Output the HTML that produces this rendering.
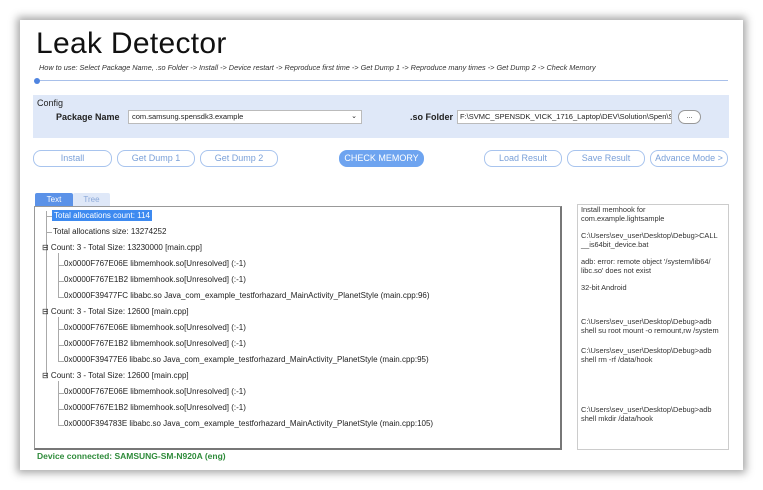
<!DOCTYPE html>
<html><head><meta charset="utf-8"><style>
*{margin:0;padding:0;box-sizing:border-box}
body{width:763px;height:490px;background:#fff;position:relative;overflow:hidden;font-family:"Liberation Sans",sans-serif;color:#222}
.a{position:absolute;white-space:nowrap}
#win{position:absolute;left:20px;top:20px;width:723px;height:450px;background:#fff;box-shadow:0 0 8px 3px rgba(0,0,0,.35)}
.btn{position:absolute;top:150px;height:17px;border:1px solid #a8c4ee;border-radius:8px;color:#7aa0d8;font-size:9px;text-align:center;line-height:15px;background:#fff}
.row{position:absolute;left:0;font-size:8px;color:#222;white-space:nowrap}
.log{position:absolute;left:581px;font-size:7.4px;line-height:9px;color:#333;white-space:nowrap}
.vl{position:absolute;border-left:1px solid #aaa}
.hl{position:absolute;border-top:1px solid #aaa}
</style></head><body>
<div id="win"></div>
<div class="a" style="left:36px;top:27px;font-size:30px;color:#111;letter-spacing:0.3px">Leak Detector</div>
<div class="a" style="left:39px;top:63px;font-size:7.3px;font-style:italic;color:#333">How to use: Select Package Name, .so Folder -&gt; Install -&gt; Device restart -&gt; Reproduce first time -&gt; Get Dump 1 -&gt; Reproduce many times -&gt; Get Dump 2 -&gt; Check Memory</div>
<div class="a" style="left:37px;top:80px;width:691px;border-top:1px solid #a8c0ea"></div>
<div class="a" style="left:34px;top:78px;width:6px;height:6px;border-radius:3px;background:#4f84e0"></div>
<div class="a" style="left:33px;top:95px;width:696px;height:43px;background:#dfe8f8"></div>
<div class="a" style="left:37px;top:98px;font-size:9px">Config</div>
<div class="a" style="left:56px;top:112px;font-size:9px;font-weight:bold">Package Name</div>
<div class="a" style="left:128px;top:110px;width:234px;height:14px;background:#fff;border:1px solid #bbb;font-size:7.5px;line-height:12px;padding-left:3px">com.samsung.spensdk3.example<span style="position:absolute;right:4px;top:0;font-size:7px">&#8964;</span></div>
<div class="a" style="left:410px;top:112px;font-size:9px;font-weight:bold">.so Folder</div>
<div class="a" style="left:457px;top:110px;width:215px;height:14px;background:#fff;border:1px solid #bbb;font-size:7.5px;line-height:12px;padding-left:2px;overflow:hidden">F:\SVMC_SPENSDK_VICK_1716_Laptop\DEV\Solution\Spen\SPen</div>
<div class="a" style="left:678px;top:110px;width:23px;height:14px;border:1px solid #999;border-radius:7px;background:#fff;font-size:7px;text-align:center;line-height:11px">...</div>
<div class="btn" style="left:33px;width:79px">Install</div>
<div class="btn" style="left:117px;width:78px">Get Dump 1</div>
<div class="btn" style="left:200px;width:78px">Get Dump 2</div>
<div class="btn" style="left:339px;width:85px;background:#6ea4f0;border-color:#6ea4f0;color:#fff">CHECK MEMORY</div>
<div class="btn" style="left:484px;width:78px">Load Result</div>
<div class="btn" style="left:567px;width:78px">Save Result</div>
<div class="btn" style="left:650px;width:78px">Advance Mode &gt;</div>
<div class="a" style="left:35px;top:193px;width:38px;height:13px;background:#5b92e8;color:#fff;font-size:8px;text-align:center;line-height:13px;border-radius:2px 2px 0 0">Text</div>
<div class="a" style="left:73px;top:193px;width:37px;height:13px;background:#dfe8f8;color:#8aa8d8;font-size:8px;text-align:center;line-height:13px;border-radius:2px 2px 0 0">Tree</div>
<div class="a" style="left:34px;top:206px;width:528px;height:244px;border:1px solid #999;border-right:2px solid #777;border-bottom:2px solid #777;background:#fff;overflow:hidden">
 <div class="vl" style="left:11px;top:4px;height:166px"></div>
 <div class="hl" style="left:11px;top:9px;width:6px"></div>
 <div class="hl" style="left:11px;top:25px;width:6px"></div>
 <div class="row" style="left:17px;top:3px;background:#3d8af0;color:#fff;padding:1px 2px">Total allocations count: 114</div>
 <div class="row" style="left:18px;top:20px">Total allocations size: 13274252</div>
 <div class="row" style="left:7px;top:36px">&#8863; Count: 3 - Total Size: 13230000 [main.cpp]</div>
 <div class="vl" style="left:23px;top:46px;height:44px"></div>
 <div class="hl" style="left:23px;top:58px;width:6px"></div><div class="row" style="left:29px;top:52px">0x0000F767E06E libmemhook.so[Unresolved] (:-1)</div>
 <div class="hl" style="left:23px;top:74px;width:6px"></div><div class="row" style="left:29px;top:68px">0x0000F767E1B2 libmemhook.so[Unresolved] (:-1)</div>
 <div class="hl" style="left:23px;top:90px;width:6px"></div><div class="row" style="left:29px;top:84px">0x0000F39477FC libabc.so Java_com_example_testforhazard_MainActivity_PlanetStyle (main.cpp:96)</div>
 <div class="row" style="left:7px;top:100px">&#8863; Count: 3 - Total Size: 12600 [main.cpp]</div>
 <div class="vl" style="left:23px;top:110px;height:44px"></div>
 <div class="hl" style="left:23px;top:122px;width:6px"></div><div class="row" style="left:29px;top:116px">0x0000F767E06E libmemhook.so[Unresolved] (:-1)</div>
 <div class="hl" style="left:23px;top:138px;width:6px"></div><div class="row" style="left:29px;top:132px">0x0000F767E1B2 libmemhook.so[Unresolved] (:-1)</div>
 <div class="hl" style="left:23px;top:154px;width:6px"></div><div class="row" style="left:29px;top:148px">0x0000F39477E6 libabc.so Java_com_example_testforhazard_MainActivity_PlanetStyle (main.cpp:95)</div>
 <div class="row" style="left:7px;top:164px">&#8863; Count: 3 - Total Size: 12600 [main.cpp]</div>
 <div class="vl" style="left:23px;top:174px;height:44px"></div>
 <div class="hl" style="left:23px;top:186px;width:6px"></div><div class="row" style="left:29px;top:180px">0x0000F767E06E libmemhook.so[Unresolved] (:-1)</div>
 <div class="hl" style="left:23px;top:202px;width:6px"></div><div class="row" style="left:29px;top:196px">0x0000F767E1B2 libmemhook.so[Unresolved] (:-1)</div>
 <div class="hl" style="left:23px;top:218px;width:6px"></div><div class="row" style="left:29px;top:212px">0x0000F394783E libabc.so Java_com_example_testforhazard_MainActivity_PlanetStyle (main.cpp:105)</div>
</div>
<div class="a" style="left:577px;top:204px;width:152px;height:246px;border:1px solid #ccc;background:#fff"></div>
<div class="log" style="top:205px">Install memhook for<br>com.example.lightsample</div>
<div class="log" style="top:231px">C:\Users\sev_user\Desktop\Debug&gt;CALL<br>__is64bit_device.bat</div>
<div class="log" style="top:257px">adb: error: remote object '/system/lib64/<br>libc.so' does not exist</div>
<div class="log" style="top:283px">32-bit Android</div>
<div class="log" style="top:317px">C:\Users\sev_user\Desktop\Debug&gt;adb<br>shell su root mount -o remount,rw /system</div>
<div class="log" style="top:346px">C:\Users\sev_user\Desktop\Debug&gt;adb<br>shell rm -rf /data/hook</div>
<div class="log" style="top:405px">C:\Users\sev_user\Desktop\Debug&gt;adb<br>shell mkdir /data/hook</div>
<div class="a" style="left:37px;top:451px;font-size:8.5px;font-weight:bold;color:#2e8b3a">Device connected: SAMSUNG-SM-N920A (eng)</div>
</body></html>
